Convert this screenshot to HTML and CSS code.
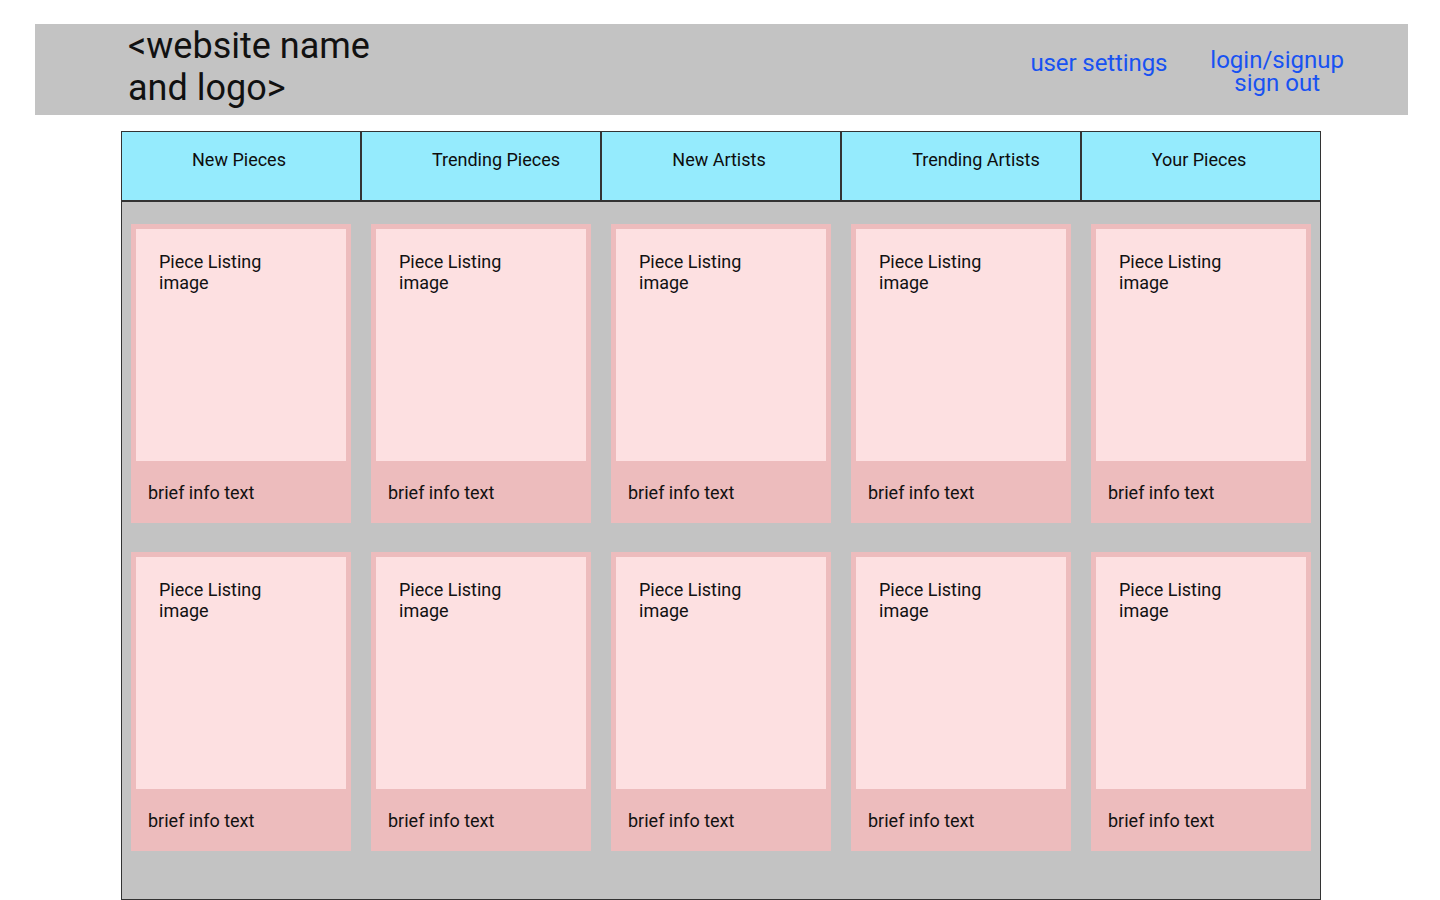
FILE: index.html
```html
<!DOCTYPE html>
<html lang="en">
<head>
<meta charset="utf-8">
<title>Art site wireframe</title>
<link rel="stylesheet" href="styles.css">
</head>
<body>
<header class="topbar">
  <div class="logo">&lt;website name<br>and logo&gt;</div>
  <nav class="account">
    <a class="link settings" href="#">user settings</a>
    <div class="auth">
      <a class="link" href="#">login/signup</a>
      <a class="link" href="#">sign out</a>
    </div>
  </nav>
</header>

<main class="board">
  <div class="tabs">
    <div class="tab">New Pieces</div>
    <div class="tab tab-shift">Trending Pieces</div>
    <div class="tab">New Artists</div>
    <div class="tab tab-shift">Trending Artists</div>
    <div class="tab">Your Pieces</div>
  </div>
  <section class="grid">
    <article class="card"><div class="img">Piece Listing<br>image</div><div class="info">brief info text</div></article>
    <article class="card"><div class="img">Piece Listing<br>image</div><div class="info">brief info text</div></article>
    <article class="card"><div class="img">Piece Listing<br>image</div><div class="info">brief info text</div></article>
    <article class="card"><div class="img">Piece Listing<br>image</div><div class="info">brief info text</div></article>
    <article class="card"><div class="img">Piece Listing<br>image</div><div class="info">brief info text</div></article>
    <article class="card"><div class="img">Piece Listing<br>image</div><div class="info">brief info text</div></article>
    <article class="card"><div class="img">Piece Listing<br>image</div><div class="info">brief info text</div></article>
    <article class="card"><div class="img">Piece Listing<br>image</div><div class="info">brief info text</div></article>
    <article class="card"><div class="img">Piece Listing<br>image</div><div class="info">brief info text</div></article>
    <article class="card"><div class="img">Piece Listing<br>image</div><div class="info">brief info text</div></article>
  </section>
</main>
</body>
</html>
```

FILE: styles.css
```css
* { box-sizing: border-box; }

html, body {
  margin: 0;
  padding: 0;
  background: #ffffff;
  font-family: Roboto, "Liberation Sans", Arial, sans-serif;
  color: #111111;
}

body {
  height: 900px;
  overflow: hidden;
  padding-top: 24px;
}

.topbar {
  margin-left: 35px;
  width: 1373px;
  height: 91px;
  background: #c3c3c3;
  display: flex;
  align-items: flex-start;
}

.logo {
  padding-left: 93px;
  padding-top: 1px;
  font-size: 36px;
  line-height: 42px;
  color: #111111;
}

.account {
  margin-left: auto;
  display: flex;
  align-items: flex-start;
  gap: 43px;
  padding-right: 64px;
  padding-top: 25px;
}

.link {
  color: #1852f2;
  text-decoration: none;
  font-size: 24px;
}

.settings {
  line-height: 28px;
  letter-spacing: -0.1px;
}

.auth {
  display: flex;
  flex-direction: column;
  align-items: center;
  line-height: 23px;
}

.board {
  margin-top: 16px;
  margin-left: 121px;
  width: 1200px;
  height: 769px;
  border: 1px solid #333333;
  background: #c3c3c3;
}

.tabs {
  display: grid;
  grid-template-columns: repeat(4, 240px) 1fr;
  height: 70px;
  border-bottom: 2px solid #333333;
  background: #95ebfd;
}

.tab {
  border-right: 2px solid #333333;
  text-align: center;
  font-size: 18px;
  line-height: 21px;
  padding-top: 17px;
  padding-right: 4px;
  color: #0d0d0d;
}

.tab:last-child {
  border-right: none;
}

.tab-shift {
  padding-left: 30px;
  padding-right: 0;
}

.grid {
  display: grid;
  grid-template-columns: repeat(5, 220px);
  column-gap: 20px;
  row-gap: 29px;
  padding: 22px 0 0 9px;
}

.card {
  height: 299px;
  background: #edbcbd;
  padding: 5px 5px 0 5px;
  display: flex;
  flex-direction: column;
}

.img {
  height: 232px;
  background: #fde0e1;
  padding: 22px 0 0 23px;
  font-size: 18px;
  line-height: 21px;
}

.info {
  flex: 1;
  display: flex;
  align-items: center;
  padding-left: 12px;
  font-size: 18px;
}
```
